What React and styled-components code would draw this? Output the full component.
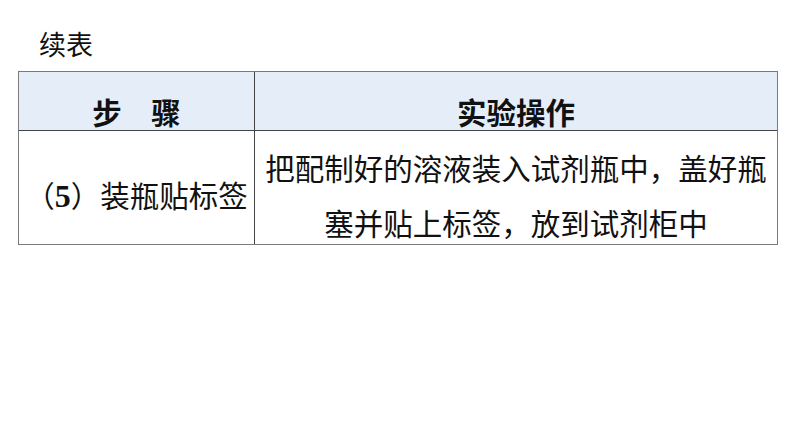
import styled, { createGlobalStyle } from 'styled-components'

const GlobalStyle = createGlobalStyle`
  html, body {
    margin: 0;
    padding: 0;
    background: #ffffff;
  }
  body {
    font-family: "Noto Sans CJK SC", "Liberation Sans", sans-serif;
    color: #111111;
  }
`

const Page = styled.div`
  width: 794px;
  height: 447px;
  padding: 24px 17px 0 18px;
  box-sizing: border-box;
`

const Title = styled.div`
  font-size: 27px;
  line-height: 40px;
  padding-left: 21px;
  margin-bottom: 7px;
`

const Table = styled.div`
  display: grid;
  grid-template-columns: 236px 1fr;
  grid-template-rows: 59px 113px;
  width: 760px;
  box-sizing: border-box;
  border: 1px solid #7a7a7a;
`

const Cell = styled.div`
  display: flex;
  flex-direction: column;
  align-items: center;
  justify-content: center;
  box-sizing: border-box;
  font-size: 29.5px;
  padding-top: ${(p) => (p.$head ? 19 : 15)}px;
  background: ${(p) => (p.$head ? '#e5edf8' : '#ffffff')};
  font-weight: ${(p) => (p.$head ? 700 : 400)};
  border-right: ${(p) => (p.$first ? '1px solid #444444' : 'none')};
  border-bottom: ${(p) => (p.$head ? '1px solid #444444' : 'none')};
`

const Line = styled.span`
  display: block;
  line-height: ${(p) => (p.$head ? 36 : 55)}px;
  white-space: nowrap;
`

const Num = styled.span`
  font-family: "Liberation Serif", serif;
  font-size: 32px;
  font-weight: 700;
`

export default function App() {
  return (
    <>
      <GlobalStyle />
      <Page>
        <Title>续表</Title>
        <Table>
          <Cell $head $first>
            <Line $head>步　骤</Line>
          </Cell>
          <Cell $head>
            <Line $head>实验操作</Line>
          </Cell>
          <Cell $first>
            <Line>
              （<Num>5</Num>）装瓶贴标签
            </Line>
          </Cell>
          <Cell>
            <Line>把配制好的溶液装入试剂瓶中，盖好瓶</Line>
            <Line>塞并贴上标签，放到试剂柜中</Line>
          </Cell>
        </Table>
      </Page>
    </>
  )
}
